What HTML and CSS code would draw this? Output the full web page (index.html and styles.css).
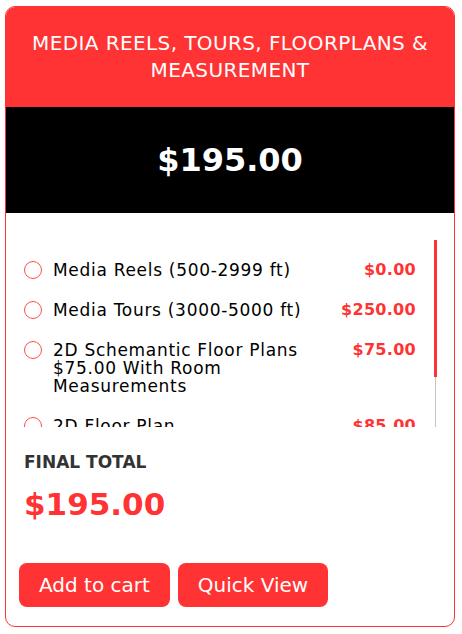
FILE: index.html
```html
<!DOCTYPE html>
<html lang="en">
<head>
    <meta charset="UTF-8">
    <meta name="viewport" content="width=device-width, initial-scale=1.0">
    <title>Media Reels Package</title>
    <link rel="stylesheet" href="styles.css">
</head>
<body>
    <div class="card">
        <!-- Titulo do pacote -->
        <div class="card-head">Media Reels, Tours, Floorplans &amp; Measurement</div>

        <!-- Preco base -->
        <div class="price-band">$195.00</div>

        <!-- Lista de opcoes com barra de rolagem -->
        <div class="options-wrap">
            <ul class="options">
                <li class="option">
                    <span class="radio"></span>
                    <span class="option-label">Media Reels (500-2999 ft)</span>
                    <span class="option-price">$0.00</span>
                </li>
                <li class="option">
                    <span class="radio"></span>
                    <span class="option-label">Media Tours (3000-5000 ft)</span>
                    <span class="option-price">$250.00</span>
                </li>
                <li class="option">
                    <span class="radio"></span>
                    <span class="option-label">2D Schemantic Floor Plans $75.00 With Room Measurements</span>
                    <span class="option-price">$75.00</span>
                </li>
                <li class="option">
                    <span class="radio"></span>
                    <span class="option-label">2D Floor Plan</span>
                    <span class="option-price">$85.00</span>
                </li>
            </ul>
            <div class="scrollbar">
                <div class="scroll-thumb"></div>
            </div>
        </div>

        <!-- Total -->
        <div class="total">
            <div class="total-label">Final Total</div>
            <div class="total-value">$195.00</div>
        </div>

        <!-- Botoes -->
        <div class="actions">
            <button class="btn">Add to cart</button>
            <button class="btn">Quick View</button>
        </div>
    </div>
</body>
</html>
```

FILE: styles.css
```css
body {
    font-family: "DejaVu Sans", "Open Sans", sans-serif;
    margin: 0;
    padding: 6px 7px 7px 5px;
    background-color: #ffffff;
}

.card {
    border: 1px solid #ff3333;
    border-radius: 10px;
    overflow: hidden;
    background-color: #fff;
}

/* Cabecalho vermelho */
.card-head {
    background-color: #ff3333;
    color: #fff;
    padding: 23px 14px;
    text-align: center;
    font-size: 20px;
    letter-spacing: 0.4px;
    line-height: 27px;
    text-transform: uppercase;
}

.price-band {
    background-color: #000;
    color: #fff;
    text-align: center;
    font-size: 32px;
    font-weight: bold;
    line-height: 50px;
    padding: 28px 0;
}

/* Lista com barra de rolagem desenhada */
.options-wrap {
    display: flex;
    margin: 27px 17px 0 18px;
    height: 187px;
}

.options {
    flex: 1;
    list-style: none;
    margin: 0;
    padding: 21px 18px 0 0;
    overflow: hidden;
}

.scrollbar {
    width: 3px;
    background: linear-gradient(to right, transparent 1px, #c4c4c4 1px, #c4c4c4 2px, transparent 2px);
}

.scroll-thumb {
    height: 137px;
    background-color: #ff3333;
}

.option {
    display: flex;
    align-items: flex-start;
    margin-bottom: 22px;
    font-size: 17px;
    letter-spacing: 0.7px;
    line-height: 18px;
}

.radio {
    flex: none;
    width: 16px;
    height: 16px;
    border: 1px solid #ff4d4d;
    border-radius: 50%;
    margin-right: 11px;
}

.option-label {
    flex: 1;
    color: #000;
}

.option-price {
    margin-left: 20px;
    color: #ff3333;
    font-size: 16px;
    font-weight: bold;
    letter-spacing: 0.3px;
    white-space: nowrap;
}

/* Total final */
.total {
    padding: 23px 18px 0;
}

.total-label {
    font-size: 17px;
    font-weight: bold;
    line-height: 24px;
    color: #333;
    text-transform: uppercase;
}

.total-value {
    margin-top: 8px;
    font-size: 31px;
    font-weight: bold;
    line-height: 44px;
    color: #ff3333;
}

.actions {
    display: flex;
    gap: 8px;
    padding: 37px 13px 19px;
}

.btn {
    background-color: #ff3333;
    color: #fff;
    border: none;
    border-radius: 8px;
    height: 44px;
    padding: 0 20px;
    font-family: inherit;
    font-size: 20px;
    cursor: pointer;
}
```
